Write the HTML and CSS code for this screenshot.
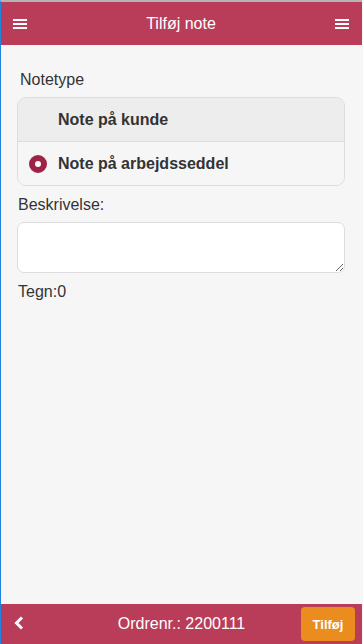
FILE: index.html
```html
<!DOCTYPE html>
<html lang="da">
<head>
<meta charset="utf-8">
<title>Tilføj note</title>
<link rel="stylesheet" href="styles.css">
</head>
<body>
<div class="page">
  <header class="bar header">
    <span class="icon-btn">
      <svg width="14" height="10" viewBox="0 0 14 10"><rect x="0" y="0" width="14" height="2" fill="#fff"/><rect x="0" y="4" width="14" height="2" fill="#fff"/><rect x="0" y="8" width="14" height="2" fill="#fff"/></svg>
    </span>
    <h1 class="title">Tilføj note</h1>
    <span class="icon-btn">
      <svg width="14" height="10" viewBox="0 0 14 10"><rect x="0" y="0" width="14" height="2" fill="#fff"/><rect x="0" y="4" width="14" height="2" fill="#fff"/><rect x="0" y="8" width="14" height="2" fill="#fff"/></svg>
    </span>
  </header>
  <main class="content">
    <div class="legend">Notetype</div>
    <div class="group">
      <div class="opt opt-off">Note på kunde</div>
      <div class="opt opt-on"><span class="radio"></span>Note på arbejdsseddel</div>
    </div>
    <label class="label" for="desc">Beskrivelse:</label>
    <textarea id="desc" class="area"></textarea>
    <div class="count">Tegn:0</div>
  </main>
  <footer class="bar footer">
    <span class="back">
      <svg width="10" height="14" viewBox="0 0 10 14"><path d="M8 1.5 L2.5 7 L8 12.5" fill="none" stroke="#fff" stroke-width="3"/></svg>
    </span>
    <span class="order">Ordrenr.: 2200111</span>
    <span class="add">Tilføj</span>
  </footer>
</div>
</body>
</html>
```

FILE: styles.css
```css
html, body {
  margin: 0;
  padding: 0;
  height: 100%;
}
body {
  font-family: "Liberation Sans", Arial, sans-serif;
  font-size: 16px;
  color: #333;
  background: #f6f6f6;
}
.page {
  height: 644px;
  box-sizing: border-box;
  border-left: 1px solid #1f86e0;
  border-top: 2px solid #b4b4b4;
  display: flex;
  flex-direction: column;
  margin-right: 1px;
}
.bar {
  background: #b93d59;
  color: #fff;
  display: flex;
  align-items: center;
  position: relative;
}
.header {
  height: 43px;
  justify-content: space-between;
  padding: 0 13px 0 12px;
}
.icon-btn {
  width: 14px;
  height: 10px;
  display: flex;
  margin-top: 0;
}
.icon-btn svg { display: block; }
.title {
  margin: 0;
  font-size: 16px;
  font-weight: normal;
  line-height: 20px;
  text-align: center;
  flex: 1;
}
.content {
  flex: 1;
  padding: 25px 17px 0 16px;
}
.legend {
  line-height: 20px;
  padding-left: 3px;
  margin-bottom: 7px;
}
.group {
  border: 1px solid #dddddd;
  border-radius: 9px;
  overflow: hidden;
}
.opt {
  height: 43px;
  display: flex;
  align-items: center;
  font-weight: bold;
  padding-left: 40px;
  position: relative;
}
.opt-off {
  background: #ededed;
  border-bottom: 1px solid #dddddd;
}
.opt-on {
  background: #f6f6f6;
}
.radio {
  position: absolute;
  left: 11px;
  top: 50%;
  margin-top: -9px;
  width: 6px;
  height: 6px;
  border: 6px solid #9d2444;
  border-radius: 50%;
  background: #fff;
}
.label {
  display: block;
  line-height: 20px;
  margin-top: 9px;
  padding-left: 1px;
}
.area {
  display: block;
  box-sizing: border-box;
  width: 100%;
  height: 51px;
  margin-top: 7px;
  border: 1px solid #dddddd;
  border-radius: 7px;
  background: #fff;
  resize: vertical;
  font-family: inherit;
  font-size: 16px;
  outline: none;
}
.count {
  line-height: 20px;
  margin-top: 9px;
  padding-left: 1px;
}
.footer {
  height: 40px;
  justify-content: center;
}
.back {
  position: absolute;
  left: 13px;
  top: 12px;
  display: flex;
}
.back svg { display: block; }
.order {
  line-height: 20px;
}
.add {
  position: absolute;
  right: 7px;
  top: 3px;
  width: 54px;
  height: 34px;
  box-sizing: border-box;
  background: #ea8d1e;
  border-radius: 4px;
  color: #fff;
  font-weight: bold;
  font-size: 13px;
  display: flex;
  align-items: center;
  justify-content: center;
}
```
